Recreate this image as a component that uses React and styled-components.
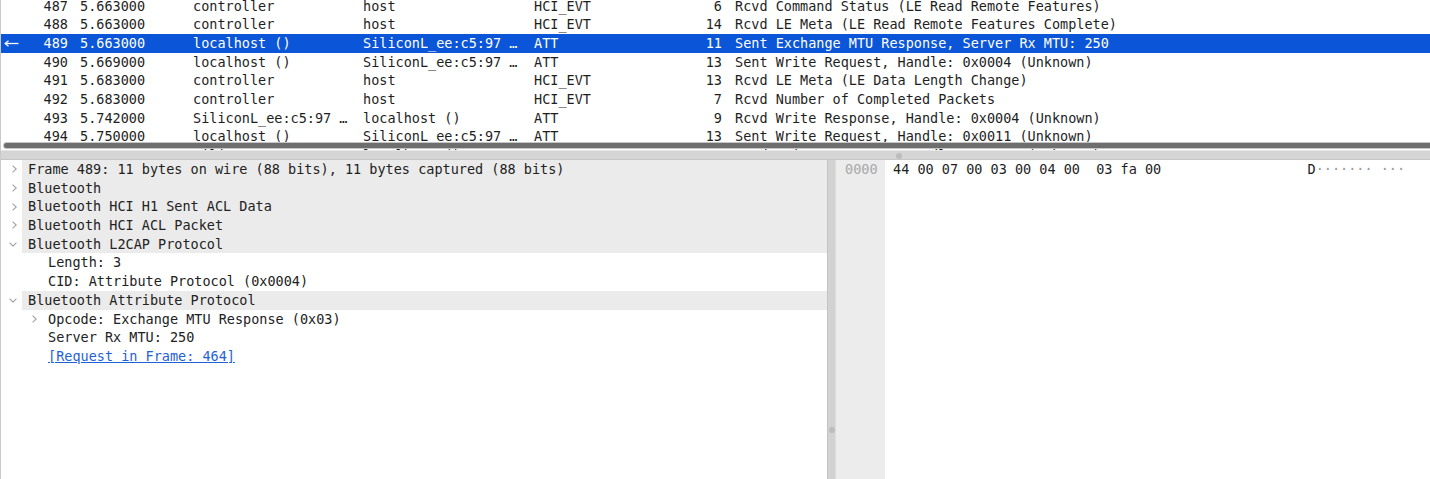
import styled, { createGlobalStyle } from "styled-components";

const GlobalStyle = createGlobalStyle`
  html, body {
    margin: 0;
    padding: 0;
    background: #ffffff;
    overflow: hidden;
  }
  body {
    font-family: "DejaVu Sans Mono", "Liberation Mono", monospace;
    font-size: 13.5px;
    color: #1e1e1e;
  }
`;

const ROW_H = 18.7;

const Window = styled.div`
  width: 1430px;
  height: 479px;
  display: flex;
  flex-direction: column;
  border-left: 1px solid #c9c9c9;
  box-sizing: border-box;
`;

const ListPane = styled.div`
  position: relative;
  height: 150px;
  overflow: hidden;
  flex-shrink: 0;
`;

const ListBody = styled.div`
  margin-top: -3.4px;
`;

const PacketRow = styled.div`
  display: grid;
  grid-template-columns: 73px 113px 170px 171px 100px 100px 1fr;
  height: ${ROW_H}px;
  line-height: ${ROW_H}px;
  white-space: pre;
  background: ${(p) => (p.$selected ? "#0a55d8" : "transparent")};
  color: ${(p) => (p.$selected ? "#ffffff" : "#1e1e1e")};
`;

const Cell = styled.div`
  overflow: hidden;
  padding-left: ${(p) => (p.$right ? 0 : 6)}px;
  padding-right: ${(p) => (p.$right ? 6 : 0)}px;
  text-align: ${(p) => (p.$right ? "right" : "left")};
`;

const NoCell = styled.div`
  display: flex;
  align-items: center;
  justify-content: space-between;
  padding-left: 3px;
  padding-right: 6px;
`;

const InfoCell = styled.div`
  padding-left: 7px;
  overflow: hidden;
`;

const ScrollKnob = styled.div`
  position: absolute;
  left: 2px;
  right: -6px;
  top: 142px;
  height: 7px;
  box-sizing: border-box;
  background: #6e6e6e;
  border: 1px solid rgba(255, 255, 255, 0.6);
  border-radius: 4px;
`;

const HSplitter = styled.div`
  position: relative;
  height: 10px;
  flex-shrink: 0;
  box-sizing: border-box;
  background: #d5d5d5;
  border-top: 1px solid #e6e6e6;
  border-bottom: 1px solid #c6c6c6;
`;

const Grip = styled.div`
  position: absolute;
  left: ${(p) => p.$x}px;
  top: ${(p) => p.$y}px;
  width: 6px;
  height: 6px;
  border-radius: 50%;
  background: #bcbcbc;
`;

const Bottom = styled.div`
  flex: 1;
  display: flex;
  min-height: 0;
`;

const DetailPane = styled.div`
  width: 826px;
  flex-shrink: 0;
  overflow: hidden;
`;

const TreeRow = styled.div`
  display: flex;
  height: ${ROW_H}px;
  line-height: ${ROW_H}px;
  padding-left: ${(p) => p.$level * 20}px;
  white-space: pre;
`;

const Twisty = styled.div`
  width: 21px;
  flex-shrink: 0;
  display: flex;
  align-items: center;
  justify-content: flex-end;
  padding-right: 5px;
  box-sizing: border-box;
`;

const Label = styled.div`
  flex: 1;
  padding-left: 6px;
  background: ${(p) => (p.$shaded ? "#ebebeb" : "transparent")};
  color: #222222;
`;

const Link = styled.span`
  color: #1f62d8;
  text-decoration: underline;
`;

const VSplitter = styled.div`
  position: relative;
  width: 9px;
  flex-shrink: 0;
  box-sizing: border-box;
  background: #d2d2d2;
  border-left: 1px solid #c3c3c3;
  border-right: 1px solid #dcdcdc;
`;

const HexPane = styled.div`
  flex: 1;
  display: flex;
`;

const OffsetCol = styled.div`
  width: 49px;
  background: #ececec;
  padding-left: 9px;
  box-sizing: border-box;
  color: #a8a8a8;
  line-height: ${ROW_H}px;
`;

const HexBody = styled.div`
  flex: 1;
  padding-left: 8px;
  line-height: ${ROW_H}px;
  white-space: pre;
  color: #1e1e1e;
`;

const Dots = styled.span`
  color: #9a9a9a;
`;

const packets = [
  ["487", "5.663000", "controller", "host", "HCI_EVT", "6", "Rcvd Command Status (LE Read Remote Features)"],
  ["488", "5.663000", "controller", "host", "HCI_EVT", "14", "Rcvd LE Meta (LE Read Remote Features Complete)"],
  ["489", "5.663000", "localhost ()", "SiliconL_ee:c5:97 …", "ATT", "11", "Sent Exchange MTU Response, Server Rx MTU: 250"],
  ["490", "5.669000", "localhost ()", "SiliconL_ee:c5:97 …", "ATT", "13", "Sent Write Request, Handle: 0x0004 (Unknown)"],
  ["491", "5.683000", "controller", "host", "HCI_EVT", "13", "Rcvd LE Meta (LE Data Length Change)"],
  ["492", "5.683000", "controller", "host", "HCI_EVT", "7", "Rcvd Number of Completed Packets"],
  ["493", "5.742000", "SiliconL_ee:c5:97 …", "localhost ()", "ATT", "9", "Rcvd Write Response, Handle: 0x0004 (Unknown)"],
  ["494", "5.750000", "localhost ()", "SiliconL_ee:c5:97 …", "ATT", "13", "Sent Write Request, Handle: 0x0011 (Unknown)"],
  ["495", "5.803000", "SiliconL_ee:c5:97 …", "localhost ()", "ATT", "9", "Rcvd Write Response, Handle: 0x0011 (Unknown)"],
];

const tree = [
  { level: 0, twisty: "closed", text: "Frame 489: 11 bytes on wire (88 bits), 11 bytes captured (88 bits)" },
  { level: 0, twisty: "closed", text: "Bluetooth" },
  { level: 0, twisty: "closed", text: "Bluetooth HCI H1 Sent ACL Data" },
  { level: 0, twisty: "closed", text: "Bluetooth HCI ACL Packet" },
  { level: 0, twisty: "open", text: "Bluetooth L2CAP Protocol" },
  { level: 1, text: "Length: 3" },
  { level: 1, text: "CID: Attribute Protocol (0x0004)" },
  { level: 0, twisty: "open", text: "Bluetooth Attribute Protocol" },
  { level: 1, twisty: "closed", text: "Opcode: Exchange MTU Response (0x03)" },
  { level: 1, text: "Server Rx MTU: 250" },
  { level: 1, link: true, text: "[Request in Frame: 464]" },
];

function RelatedArrow() {
  return (
    <svg width="15" height="7" viewBox="0 0 15 7">
      <path d="M1.5 3.5 H14.5" stroke="#fff" strokeWidth="1.3" />
      <path d="M4.5 0.8 L1.2 3.5 L4.5 6.2" fill="none" stroke="#fff" strokeWidth="1.3" />
    </svg>
  );
}

function Chevron({ open }) {
  return open ? (
    <svg width="8" height="5" viewBox="0 0 8 5">
      <path d="M0.6 0.6 L4 4.2 L7.4 0.6" fill="none" stroke="#a3a3a3" strokeWidth="1.1" />
    </svg>
  ) : (
    <svg width="5" height="8" viewBox="0 0 5 8">
      <path d="M0.6 0.6 L4.2 4 L0.6 7.4" fill="none" stroke="#a3a3a3" strokeWidth="1.1" />
    </svg>
  );
}

const hexLine = "44 00 07 00 03 00 04 00  03 fa 00";

export default function App() {
  return (
    <>
      <GlobalStyle />
      <Window>
        <ListPane>
          <ListBody>
            {packets.map((p) => {
              const selected = p[0] === "489";
              return (
                <PacketRow key={p[0]} $selected={selected}>
                  <NoCell>
                    {selected ? <RelatedArrow /> : <span />}
                    <span>{p[0]}</span>
                  </NoCell>
                  <Cell>{p[1]}</Cell>
                  <Cell>{p[2]}</Cell>
                  <Cell>{p[3]}</Cell>
                  <Cell>{p[4]}</Cell>
                  <Cell $right>{p[5]}</Cell>
                  <InfoCell>{p[6]}</InfoCell>
                </PacketRow>
              );
            })}
          </ListBody>
          <ScrollKnob />
        </ListPane>
        <HSplitter>
          <Grip $x={895} $y={2} />
        </HSplitter>
        <Bottom>
          <DetailPane>
            {tree.map((n, i) => (
              <TreeRow key={i} $level={n.level}>
                <Twisty>{n.twisty && <Chevron open={n.twisty === "open"} />}</Twisty>
                <Label $shaded={n.level === 0}>
                  {n.link ? <Link>{n.text}</Link> : n.text}
                </Label>
              </TreeRow>
            ))}
          </DetailPane>
          <VSplitter>
            <Grip $x={0.5} $y={267} />
          </VSplitter>
          <HexPane>
            <OffsetCol>0000</OffsetCol>
            <HexBody>
              {hexLine.padEnd(51, " ")}D<Dots>{"·······"}</Dots> <Dots>{"···"}</Dots>
            </HexBody>
          </HexPane>
        </Bottom>
      </Window>
    </>
  );
}
